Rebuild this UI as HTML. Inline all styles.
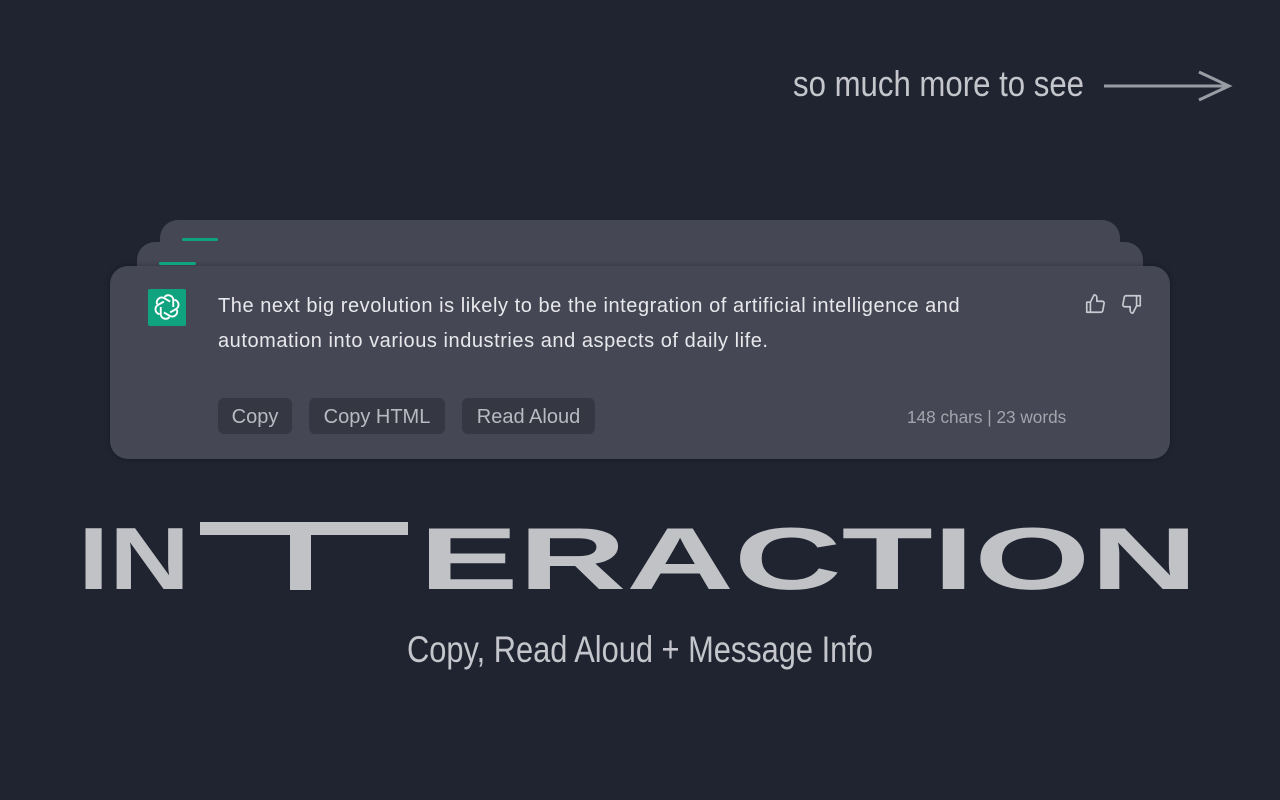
<!DOCTYPE html>
<html><head><meta charset="utf-8"><style>
html,body{margin:0;padding:0}
body{width:1280px;height:800px;background:#1f2430;position:relative;overflow:hidden;font-family:"Liberation Sans",sans-serif}
.c{position:absolute;background:#454754;border-radius:18px}
.g{position:absolute;height:3px;background:#10a37f;border-radius:2px}
.t{position:absolute;left:218px;color:#e8e8ec;font-size:20px;letter-spacing:0.55px;line-height:35px;top:289px;width:800px}
.b{position:absolute;top:398px;height:36px;background:#353743;border-radius:6px;color:#b8bac2;font-size:20px;line-height:38px;text-align:center}
</style></head><body>
<svg width="1280" height="800" style="position:absolute;left:0;top:0">
<text x="793" y="96" font-family="Liberation Sans" font-size="36" fill="#c4c6cc" textLength="291" lengthAdjust="spacingAndGlyphs">so much more to see</text>
<line x1="1104" y1="86" x2="1229" y2="86" stroke="#9a9ca4" stroke-width="3"/>
<polyline points="1199,72 1229,86 1199,100" fill="none" stroke="#9a9ca4" stroke-width="3"/>
<text x="78" y="589" font-family="Liberation Sans" font-weight="bold" font-size="88" fill="#c0c2c6" textLength="112" lengthAdjust="spacingAndGlyphs">IN</text>
<rect x="200" y="522" width="208" height="13" fill="#c0c2c6"/>
<rect x="290" y="522" width="21" height="68" fill="#c0c2c6"/>
<text x="419" y="589" font-family="Liberation Sans" font-weight="bold" font-size="88" fill="#c0c2c6" textLength="779" lengthAdjust="spacingAndGlyphs">ERACTION</text>
<text x="407" y="662" font-family="Liberation Sans" font-size="37" fill="#c4c6cc" textLength="466" lengthAdjust="spacingAndGlyphs">Copy, Read Aloud + Message Info</text>
</svg>
<div class="c" style="left:160px;top:220px;width:960px;height:100px"></div>
<div class="c" style="left:137px;top:242px;width:1006px;height:100px"></div>
<div class="c" style="left:110px;top:266px;width:1060px;height:193px;box-shadow:0 0 6px rgba(0,0,0,.3)"></div>
<div class="g" style="left:182px;top:238px;width:36px"></div>
<div class="g" style="left:159px;top:262px;width:37px"></div>
<div style="position:absolute;left:148px;top:289px;width:38px;height:37px;background:#10a37f;border-radius:2px"></div>
<svg width="30" height="30" viewBox="0 0 24 24" style="position:absolute;left:152px;top:292px" fill="none" stroke="#fff" stroke-width="1.5">
<g transform="translate(12 12)">
<path d="M-2 -8 a4 4 0 0 1 7 2 v6" transform="rotate(0)"/>
<path d="M-2 -8 a4 4 0 0 1 7 2 v6" transform="rotate(60)"/>
<path d="M-2 -8 a4 4 0 0 1 7 2 v6" transform="rotate(120)"/>
<path d="M-2 -8 a4 4 0 0 1 7 2 v6" transform="rotate(180)"/>
<path d="M-2 -8 a4 4 0 0 1 7 2 v6" transform="rotate(240)"/>
<path d="M-2 -8 a4 4 0 0 1 7 2 v6" transform="rotate(300)"/>
</g></svg>
<div class="t">The next big revolution is likely to be the integration of artificial intelligence and automation into various industries and aspects of daily life.</div>
<svg width="22" height="22" viewBox="0 0 24 24" style="position:absolute;left:1084px;top:293px" fill="none" stroke="#c8cad0" stroke-width="1.8" stroke-linejoin="round"><path d="M7 10v11H3V10zM7 10l4-8a3 3 0 0 1 3 3v4h6a2 2 0 0 1 2 2l-1.5 8a2 2 0 0 1-2 2H7"/></svg>
<svg width="22" height="22" viewBox="0 0 24 24" style="position:absolute;left:1121px;top:293px" fill="none" stroke="#c8cad0" stroke-width="1.8" stroke-linejoin="round"><path d="M17 14V3h4v11zM17 14l-4 8a3 3 0 0 1-3-3v-4H4a2 2 0 0 1-2-2l1.5-8a2 2 0 0 1 2-2H17"/></svg>
<div class="b" style="left:218px;width:74px">Copy</div>
<div class="b" style="left:309px;width:136px">Copy HTML</div>
<div class="b" style="left:462px;width:133px">Read Aloud</div>
<div style="position:absolute;left:907px;top:407px;color:#a3a5ad;font-size:17.2px;width:180px;white-space:nowrap">148 chars | 23 words</div>
</body></html>
